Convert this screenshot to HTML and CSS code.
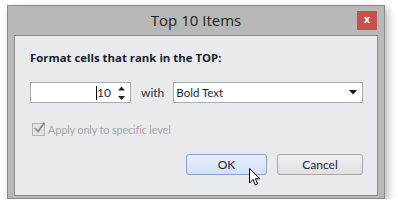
FILE: index.html
```html
<!DOCTYPE html>
<html>
<head>
<meta charset="utf-8">
<link rel="stylesheet" href="styles.css">
</head>
<body>
<div class="window">
  <div class="titlebar">
    <span class="title">Top 10 Items</span>
    <span class="close">x</span>
  </div>
  <div class="panel">
    <div class="heading">Format cells that rank in the TOP:</div>
    <div class="row">
      <div class="spin">
        <span class="value"><span class="caret"></span>10</span>
        <svg class="spinbtn" width="7" height="16" viewBox="0 0 7 16">
          <path d="M3.5 1.5 L7 5.5 L0 5.5 Z" fill="#222"/>
          <path d="M0 11 L7 11 L3.5 15 Z" fill="#222"/>
        </svg>
      </div>
      <span class="with">with</span>
      <div class="combo">
        <span>Bold Text</span>
        <svg width="8" height="5" viewBox="0 0 8 5"><path d="M0 0 L8 0 L4 4.5 Z" fill="#1a1a1a"/></svg>
      </div>
    </div>
    <div class="check">
      <span class="box">
        <svg width="14" height="14" viewBox="0 0 14 14"><path d="M3 7 L6 10.5 L12.5 1.5" fill="none" stroke="#8c8c8c" stroke-width="1.8"/></svg>
      </span>
      <span class="checklabel">Apply only to specific level</span>
    </div>
    <div class="buttons">
      <button class="btn ok">OK</button>
      <button class="btn cancel">Cancel</button>
    </div>
  </div>
  <svg class="cursor" width="13" height="19" viewBox="0 0 13 19">
    <path d="M0.5 0.5 L0.5 15 L4 11.5 L6.3 17 L8.6 16 L6.4 10.8 L11 10.8 Z" fill="#fff" stroke="#000" stroke-width="1" stroke-linejoin="miter"/>
  </svg>
</div>
</body>
</html>
```

FILE: styles.css
```css
html, body {
  margin: 0;
  padding: 0;
  background: #ffffff;
}
body {
  padding: 5px 0 0 7px;
  font-family: "Lato", "Open Sans", sans-serif;
}
.window {
  position: relative;
  height: 191px;
  border: 1px solid #8a8a8a;
  background: #b8b8b8;
  padding: 0 6px 1px 6px;
  box-sizing: content-box;
  width: 364px;
  box-shadow: 3px 4px 8px rgba(0,0,0,0.28);
}
.titlebar {
  position: relative;
  height: 29px;
  display: flex;
  align-items: center;
  justify-content: center;
}
.title {
  font-family: "Open Sans", sans-serif;
  font-size: 15px;
  color: #222;
  margin-top: -1px;
}
.close {
  position: absolute;
  right: 1px;
  top: 5px;
  width: 20px;
  height: 19px;
  background: #c75050;
  color: #fff;
  font-weight: bold;
  font-size: 10px;
  line-height: 18px;
  text-align: center;
  font-family: "DejaVu Sans", sans-serif;
}
.panel {
  height: 159px;
  border: 1px solid #8c8c8c;
  background: #e9eaee;
  padding: 0 14px 0 15px;
}
.heading {
  font-family: "Open Sans", sans-serif;
  font-weight: bold;
  font-size: 11.4px;
  color: #1b1e2b;
  margin-top: 13px;
  line-height: 17px;
}
.row {
  display: flex;
  align-items: center;
  margin-top: 16px;
  height: 21px;
}
.spin {
  width: 99px;
  height: 19px;
  border: 1px solid #a9acb3;
  background: #fff;
  display: flex;
  align-items: center;
  justify-content: flex-end;
  box-sizing: content-box;
}
.value {
  font-size: 12px;
  color: #1e1e3a;
  margin-right: 7px;
}
.caret {
  display: inline-block;
  width: 1px;
  height: 14px;
  background: #000;
  vertical-align: -3px;
}
.spinbtn {
  margin-right: 5px;
}
.with {
  font-size: 12px;
  color: #2a2d40;
  margin-left: 10px;
  margin-right: 9px;
}
.combo {
  height: 19px;
  border: 1px solid #a9acb3;
  background: #fff;
  display: flex;
  align-items: center;
  justify-content: space-between;
  padding: 0 5px 0 2px;
  box-sizing: content-box;
  flex: 1;
  font-size: 11.5px;
  color: #1e1e3a;
}
.check {
  display: flex;
  align-items: center;
  margin-top: 20px;
  margin-left: 2px;
  height: 13px;
}
.box {
  width: 11px;
  height: 11px;
  border: 1px solid #b4b4b8;
  background: #e2e3e6;
  position: relative;
}
.box svg {
  position: absolute;
  left: -1px;
  top: -3px;
}
.checklabel {
  font-size: 11px;
  letter-spacing: -0.2px;
  color: #a4a6ac;
  margin-left: 3px;
}
.buttons {
  display: flex;
  justify-content: flex-end;
  gap: 10px;
  margin-top: 18px;
}
.btn {
  height: 21px;
  font-family: "Lato", sans-serif;
  font-size: 12px;
  color: #1e1e3a;
  border-radius: 3px;
  padding: 0;
  margin: 0;
}
.ok {
  width: 81px;
  border: 1px solid #8aa0c8;
  background: linear-gradient(#e7effd, #d3e0f8);
}
.cancel {
  width: 86px;
  border: 1px solid #a8a8a8;
  background: linear-gradient(#f1f1f1, #e0e0e0);
}
.cursor {
  position: absolute;
  left: 241px;
  top: 162px;
}
```
